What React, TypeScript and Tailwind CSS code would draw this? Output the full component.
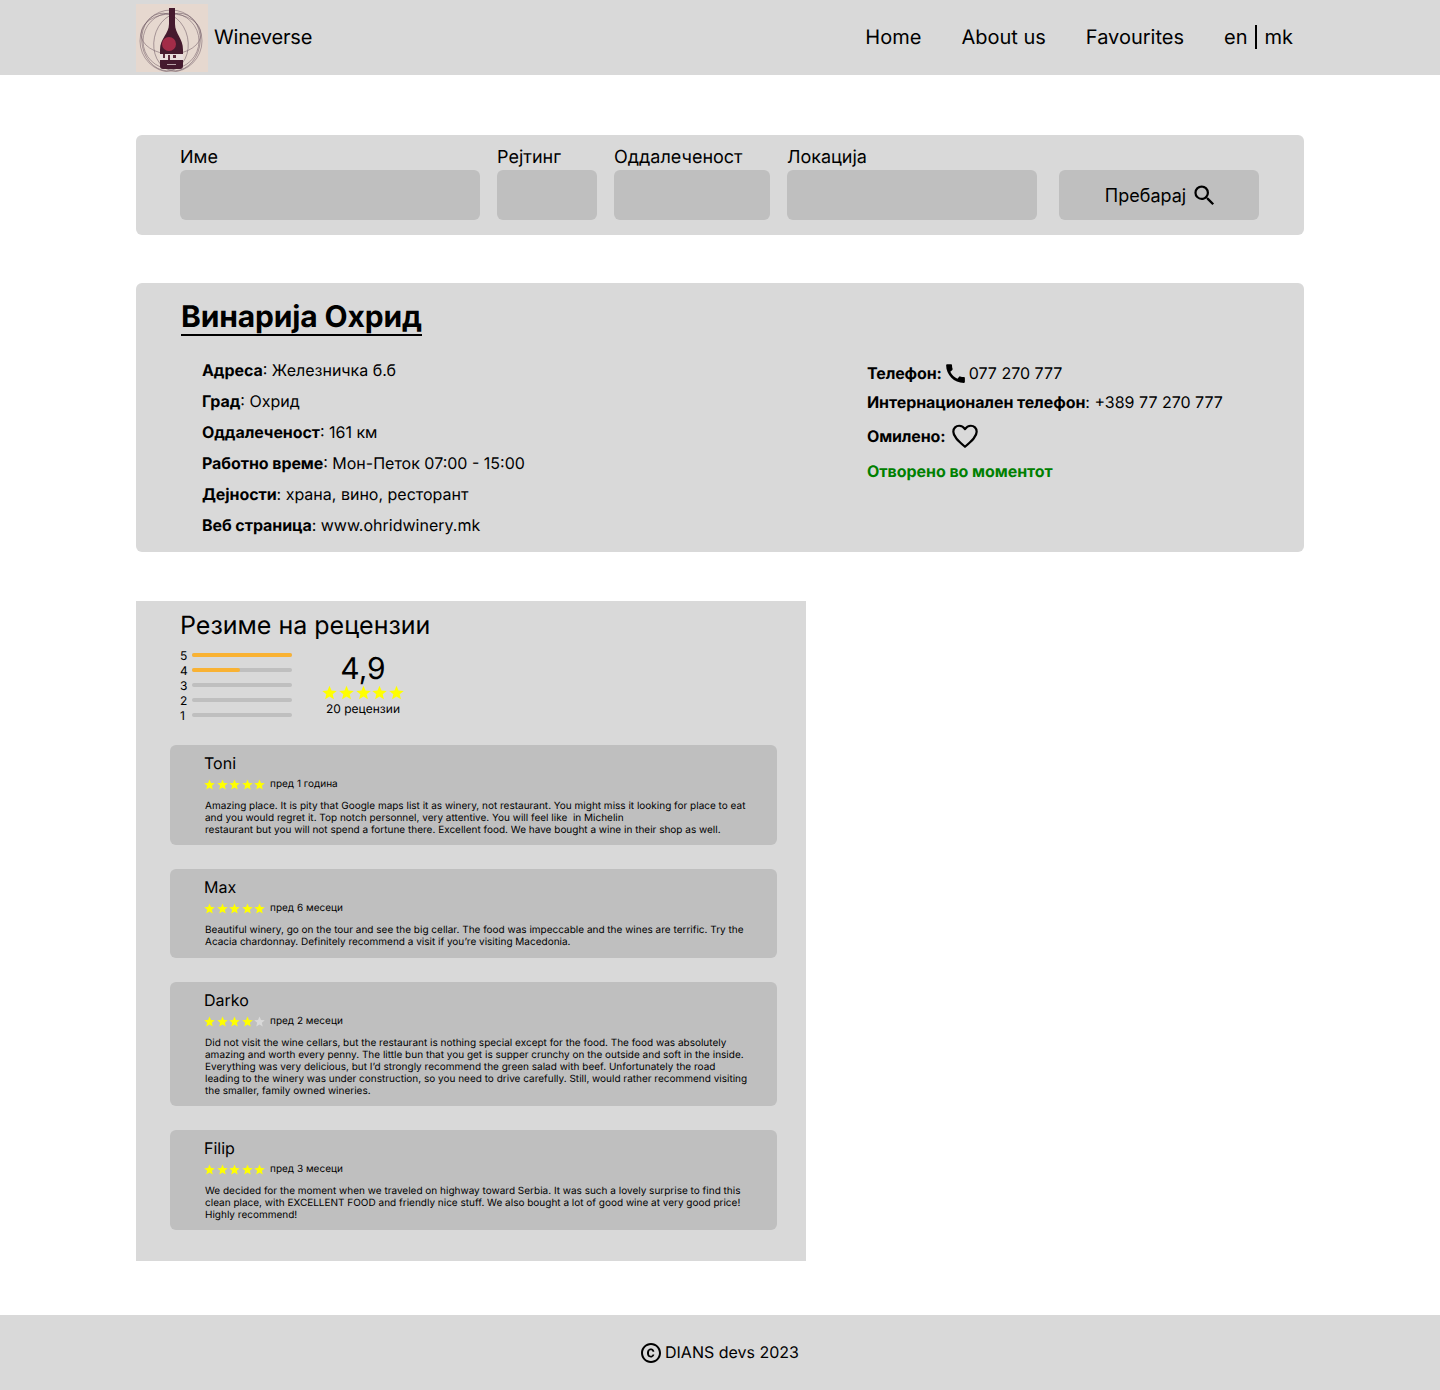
import { MdCall, MdOutlineCopyright, MdOutlineSearch } from 'react-icons/md'

const fields = [
  { label: 'Име', width: 'w-[300px]' },
  { label: 'Рејтинг', width: 'w-[100px]' },
  { label: 'Оддалеченост', width: 'w-[156px]' },
  { label: 'Локација', width: 'w-[250px]' },
]

const details = [
  ['Адреса', 'Железничка б.б'],
  ['Град', 'Охрид'],
  ['Оддалеченост', '161 км'],
  ['Работно време', 'Мон-Петок 07:00 - 15:00'],
  ['Дејности', 'храна, вино, ресторант'],
  ['Веб страница', 'www.ohridwinery.mk'],
]

const bars = [
  { n: 5, value: 100 },
  { n: 4, value: 48 },
  { n: 3, value: 0 },
  { n: 2, value: 0 },
  { n: 1, value: 0 },
]

const reviews = [
  {
    name: 'Toni',
    stars: 5,
    time: 'пред 1 година',
    pad: 'pb-[9px]',
    lines: [
      'Amazing place. It is pity that Google maps list it as winery, not restaurant. You might miss it looking for place to eat',
      'and you would regret it. Top notch personnel, very attentive. You will feel like  in Michelin',
      'restaurant but you will not spend a fortune there. Excellent food. We have bought a wine in their shop as well.',
    ],
  },
  {
    name: 'Max',
    stars: 5,
    time: 'пред 6 месеци',
    pad: 'pb-[10px]',
    lines: [
      'Beautiful winery, go on the tour and see the big cellar. The food was impeccable and the wines are terrific. Try the',
      'Acacia chardonnay. Definitely recommend a visit if you’re visiting Macedonia.',
    ],
  },
  {
    name: 'Darko',
    stars: 4,
    time: 'пред 2 месеци',
    pad: 'pb-[9px]',
    lines: [
      'Did not visit the wine cellars, but the restaurant is nothing special except for the food. The food was absolutely',
      'amazing and worth every penny. The little bun that you get is supper crunchy on the outside and soft in the inside.',
      'Everything was very delicious, but I’d strongly recommend the green salad with beef. Unfortunately the road',
      'leading to the winery was under construction, so you need to drive carefully. Still, would rather recommend visiting',
      'the smaller, family owned wineries.',
    ],
  },
  {
    name: 'Filip',
    stars: 5,
    time: 'пред 3 месеци',
    pad: 'pb-[9px]',
    lines: [
      'We decided for the moment when we traveled on highway toward Serbia. It was such a lovely surprise to find this',
      'clean place, with EXCELLENT FOOD and friendly nice stuff. We also bought a lot of good wine at very good price!',
      'Highly recommend!',
    ],
  },
]

function Star({ on = true, size }: { on?: boolean; size: number }) {
  return (
    <svg width={size} height={size} viewBox="0 0 24 24" className={on ? 'fill-[#ffff00]' : 'fill-[#d9d9d9]'}>
      <path d="M12 1l3.200 7.800 8.300.6-6.400 5.300 2 8.100L12 18.400l-7.100 4.400 2-8.100L.5 9.400l8.300-.6z" />
    </svg>
  )
}

function Logo() {
  return (
    <svg width="72" height="68" viewBox="0 0 72 68" className="shrink-0 bg-[#e6d8cf]">
      <g fill="none" stroke="#6b5560" strokeWidth="0.5">
        <circle cx="35" cy="37" r="31" />
        <circle cx="35" cy="37" r="28" />
        <ellipse cx="29" cy="38" rx="23" ry="29" transform="rotate(-12 29 38)" />
        <ellipse cx="41" cy="38" rx="23" ry="29" transform="rotate(12 41 38)" />
        <ellipse cx="35" cy="30" rx="30" ry="20" />
      </g>
      <path d="M33 4h6v16c0 10 8 14 8 26v16c0 2-1 3-3 3H27c-2 0-3-1-3-3V46c0-12 9-16 9-26z" fill="#451a2e" />
      <circle cx="33" cy="40" r="7" fill="#a32c48" />
      <rect x="24" y="50" width="23" height="6" fill="#e8dedd" />
      <path d="M27 50v4h2v-4zm5 1v5h2v-5zm5 0v3h3v-3z" fill="#5a2a3c" />
      <rect x="31" y="60" width="9" height="1" fill="#b8a4a8" />
    </svg>
  )
}

function HeartIcon() {
  return (
    <svg width="28" height="28" viewBox="0 0 24 24" fill="none" stroke="black" strokeWidth="1.900" strokeLinejoin="round">
      <path d="M12 21.200C5.500 15.800 2 12.300 2 8.300 2 5.300 4.300 3.200 7 3.200c2 0 3.800 1 5 2.900 1.200-1.900 3-2.900 5-2.900 2.700 0 5 2.100 5 5.100 0 4-3.500 7.500-10 12.900z" />
    </svg>
  )
}

export default function App() {
  return (
    <div className="flex h-[1390px] flex-col bg-white font-['Inter',sans-serif] text-black [text-rendering:geometricPrecision]">
      <header className="flex h-[75px] items-center justify-between bg-[#d9d9d9] pr-[147px] pl-[136px]">
        <div className="flex items-center gap-[6px]">
          <Logo />
          <span className="-mt-[2px] text-[20px] tracking-[-0.2px]">Wineverse</span>
        </div>
        <nav className="-mt-[2px] flex items-center gap-10 text-[20px]">
          <span>Home</span>
          <span>About us</span>
          <span>Favourites</span>
          <span className="flex items-center">
            en
            <span className="mr-2 ml-[7px] h-6 w-[2px] bg-black" />
            mk
          </span>
        </nav>
      </header>

      <main className="flex flex-1 flex-col px-[136px]">
        <section className="mt-[60px] flex h-[100px] items-end gap-[17px] rounded-md bg-[#d9d9d9] pb-[15px] pl-[44px]">
          {fields.map((f) => (
            <div key={f.label} className={f.width}>
              <div className="text-[18px] leading-[24px]">{f.label}</div>
              <div className="h-[50px] rounded-md bg-[#bfbfbf]" />
            </div>
          ))}
          <button className="ml-[5px] flex h-[50px] w-[200px] items-center justify-center gap-[5px] rounded-md bg-[#bfbfbf] pl-[5px] text-[18px]">
            Пребарај
            <MdOutlineSearch size={27} />
          </button>
        </section>

        <section className="mt-[48px] h-[269px] rounded-md bg-[#d9d9d9] pt-[17px] pl-[45px]">
          <h1 className="inline-block border-b-2 border-black text-[30px] leading-[34px] font-bold tracking-[-0.15px]">
            Винарија Охрид
          </h1>
          <div className="mt-[25px] flex">
            <div className="flex w-[686px] flex-col gap-[12px] pl-[21px] text-[16px] leading-[19px]">
              {details.map(([k, v]) => (
                <div key={k}>
                  <b className="tracking-[-0.08px]">{k}</b>: {v}
                </div>
              ))}
            </div>
            <div className="-mt-[1px] flex flex-col text-[16px] leading-[19px]">
              <div className="flex h-[27px] items-center gap-[1px]">
                <b className="tracking-[-0.15px]">Телефон:</b>
                <MdCall size={25} />
                <span>077 270 777</span>
              </div>
              <div className="mt-[6px]">
                <b className="tracking-[-0.08px]">Интернационален телефон</b>: +389 77 270 777
              </div>
              <div className="mt-[10px] flex items-center gap-[6px]">
                <b className="tracking-[-0.15px]">Омилено:</b>
                <HeartIcon />
              </div>
              <b className="mt-[12px] tracking-[-0.05px] text-[#008000]">Отворено во моментот</b>
            </div>
          </div>
        </section>

        <section className="mt-[49px] h-[660px] w-[670px] bg-[#d9d9d9] pt-[9px]">
          <h2 className="pl-[44px] text-[25px] leading-[32px]">Резиме на рецензии</h2>
          <div className="mt-[6px] flex pl-[44px]">
            <div className="flex w-[112px] flex-col">
              {bars.map((b) => (
                <div key={b.n} className="flex h-[15px] items-center gap-[5px] text-[12px] leading-[15px]">
                  <span className="w-[7px]">{b.n}</span>
                  <div className="mb-[1px] h-[4px] w-[100px] rounded-full bg-[#bfbfbf]">
                    <div className="h-full rounded-full bg-[#f9b233]" style={{ width: `${b.value}%` }} />
                  </div>
                </div>
              ))}
            </div>
            <div className="ml-[30px] flex w-[82px] flex-col items-center">
              <div className="pt-[2px] text-[30px] leading-[39px]">4,9</div>
              <div className="-mt-[4px] flex gap-[1.700px]">
                {[0, 1, 2, 3, 4].map((i) => (
                  <Star key={i} size={15} />
                ))}
              </div>
              <div className="mt-[1px] whitespace-nowrap text-[12px] leading-[15px]">20 рецензии</div>
            </div>
          </div>

          <div className="mt-[22px] ml-[34px] flex w-[607px] flex-col gap-[24px]">
            {reviews.map((r) => (
              <article key={r.name} className={`rounded-md bg-[#bfbfbf] pt-[9px] pl-[34px] ${r.pad}`}>
                <div className="text-[16px] leading-[19px]">{r.name}</div>
                <div className="mt-[4px] flex h-[14px] items-center">
                  <div className="flex gap-[1.500px]">
                    {[1, 2, 3, 4, 5].map((i) => (
                      <Star key={i} size={11} on={i <= r.stars} />
                    ))}
                  </div>
                  <span className="ml-[5px] text-[10px]">{r.time}</span>
                </div>
                <div className="mt-[9px] pl-[1px] text-[10px] leading-[12px] whitespace-pre">
                  {r.lines.map((line, i) => (
                    <div key={i}>{line}</div>
                  ))}
                </div>
              </article>
            ))}
          </div>
        </section>
      </main>

      <footer className="flex h-[75px] items-center justify-center gap-[2px] bg-[#d9d9d9] pr-[2px] text-[16px]">
        <MdOutlineCopyright size={24} />
        <span className="-mt-[2px]">DIANS devs 2023</span>
      </footer>
    </div>
  )
}
